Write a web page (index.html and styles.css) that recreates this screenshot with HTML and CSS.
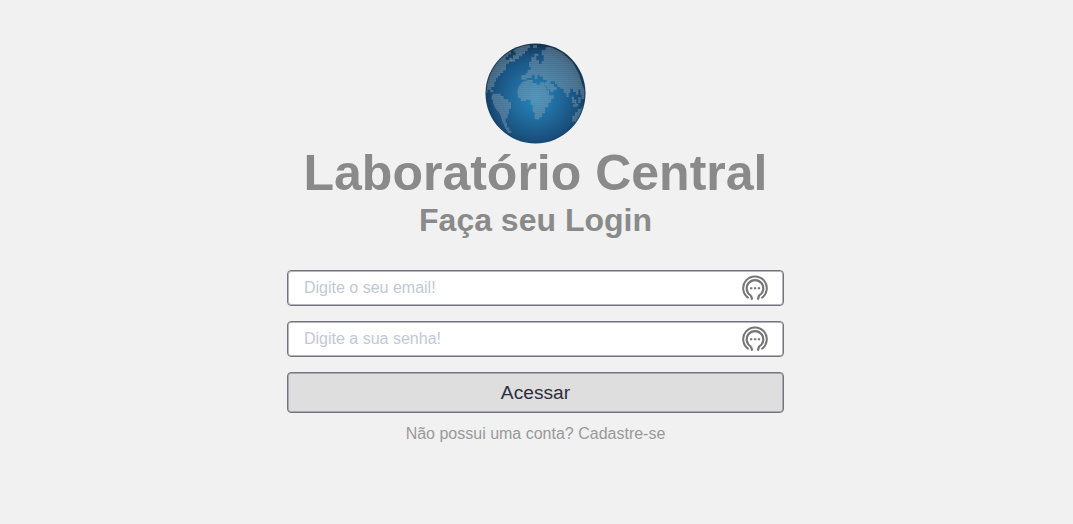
FILE: index.html
```html
<!DOCTYPE html>
<html lang="pt-BR">
<head>
<meta charset="utf-8">
<title>Laboratório Central</title>
<link rel="stylesheet" href="styles.css">
</head>
<body>
<main class="login">
  <svg class="globe" viewBox="14 14 303 303" aria-hidden="true">
    <defs>
      <radialGradient id="sea" cx="50%" cy="54%" r="54%">
        <stop offset="0" stop-color="#2688bf"/>
        <stop offset=".45" stop-color="#20699b"/>
        <stop offset=".8" stop-color="#194f7c"/>
        <stop offset="1" stop-color="#102f4b"/>
      </radialGradient>
      <pattern id="dots" width="6" height="6" patternUnits="userSpaceOnUse">
        <rect width="6" height="6" fill="#8fa3ab" fill-opacity=".32"/>
        <rect width="6" height="3" fill="#a6b8be" fill-opacity=".22"/>
      </pattern>
      <clipPath id="disc"><circle cx="165.5" cy="165.5" r="147"/></clipPath>
    </defs>
    <circle cx="165.5" cy="165.5" r="150" fill="url(#sea)"/>
    <g clip-path="url(#disc)" fill="url(#dots)">
      <path d="M18 150V128L34 93L52 68L75 46L92 38V48H84V55H76V65H86V58H94V70H86V76H77V96H69V104H60V113H53V120H47V130H42V146H33V155H39V162H30V154H22V164H17Z"/>
      <path d="M104 32L132 20H149V29H142V38H134V47H126V54H116V62H104V70H91V61H98V50H106V40H98Z"/>
      <path d="M38 166H61V173H70V182H84V191H92V211H86V226H82V240H76V253H80V267H87V277H93V284H84L75 270L66 249L61 232L55 221L46 211L38 194V184H34V172Z"/>
      <path d="M111 158L116 143L127 130L143 125H157V134H169V139H179V132H192V144H198V156H206V171H220V181H212V193H204V207H194V225H185V237H177V243H163V222H157V199H151V184H137V188H121V179H113Z"/>
      <path d="M123 110H136V104H142V95H151V85H146V70H153V56H162V46H174V53H168V66H176V77H184V68H190V51H184V36H196V26H211L246 43L278 73L297 109L306 140L313 157V182H304V169H300V154H294V169H287V161H278V151H270V164H265V176H258V164H250V151H240V146H231V137H224V129H211V137H221V145H229V155H220V161H210V153H200V143H193V132H199V125H188V115H178V109H171V122H163V111H154V119H139V124H123Z"/>
      <path d="M158 20H170V29H158ZM274 175H281V184H288V196H294V204H284V194H276ZM294 176H301V194H294ZM278 198H291V205H278ZM305 206L314 192V208L303 238L293 250H276V232H284V222H292V212H300Z"/>
    </g>
  </svg>
  <h1 class="title">Laboratório Central</h1>
  <h2 class="subtitle">Faça seu Login</h2>
  <form class="form">
    <div class="field">
      <input class="input" type="email" placeholder="Digite o seu email!" aria-label="Email">
      <svg class="key" viewBox="0 0 26 28" aria-hidden="true"><g fill="none" stroke="#757575"><path stroke-width="2" d="M6.6 24.1A11.8 11.8 0 1 1 19.4 24.1"/><path stroke-width="2.2" d="M9 21.6A8.3 8.3 0 1 1 17 21.6L15.8 25.6M9 21.6L10.2 25.6"/></g><path fill="#757575" d="M8 13.2h2.3v2H8zm3.9 0h2.3v2h-2.3zm3.9 0h2.3v2h-2.3z"/></svg>
    </div>
    <div class="field">
      <input class="input" type="password" placeholder="Digite a sua senha!" aria-label="Senha">
      <svg class="key" viewBox="0 0 26 28" aria-hidden="true"><g fill="none" stroke="#757575"><path stroke-width="2" d="M6.6 24.1A11.8 11.8 0 1 1 19.4 24.1"/><path stroke-width="2.2" d="M9 21.6A8.3 8.3 0 1 1 17 21.6L15.8 25.6M9 21.6L10.2 25.6"/></g><path fill="#757575" d="M8 13.2h2.3v2H8zm3.9 0h2.3v2h-2.3zm3.9 0h2.3v2h-2.3z"/></svg>
    </div>
    <button class="button" type="button">Acessar</button>
  </form>
  <p class="signup">Não possui uma conta? Cadastre-se</p>
</main>
</body>
</html>
```
FILE: styles.css
```css
* { box-sizing: border-box; }
body {
  margin: 0;
  background: #f1f1f1;
  color: #8a8a8a;
  font-family: "Liberation Sans", Arial, sans-serif;
}
.login {
  display: flex;
  flex-direction: column;
  align-items: center;
  width: 1071px;
  padding-top: 43px;
}
.globe { width: 101px; height: 101px; }
.title { margin: 0; font-size: 50px; line-height: 58px; }
.subtitle { margin: 0; font-size: 32px; line-height: 36px; }
.form {
  display: flex;
  flex-direction: column;
  gap: 15px;
  width: 497px;
  margin-top: 32px;
}
.field {
  display: flex;
  align-items: center;
  height: 36px;
  padding: 0 15px 0 16px;
  background: #fff;
  border: 1px solid #75737e;
  border-radius: 4px;
  box-shadow: inset 0 0 0 1px #b5b4ba;
}
.input {
  flex: 1;
  min-width: 0;
  padding: 0;
  border: 0;
  outline: 0;
  background: transparent;
  font: 16px "Liberation Sans", Arial, sans-serif;
}
.input::placeholder { color: #c1c8d5; opacity: 1; }
.key { width: 26px; height: 28px; }
.button {
  height: 41px;
  padding: 1px 0 0;
  background: #dedede;
  border: 1px solid #75737e;
  border-radius: 4px;
  box-shadow: inset 0 0 0 1px #aaa9b0;
  color: #2e2d3d;
  font: 19.2px "Liberation Sans", Arial, sans-serif;
}
.signup { margin: 12px 0 0; font-size: 16px; line-height: 18px; color: #999; }
```
